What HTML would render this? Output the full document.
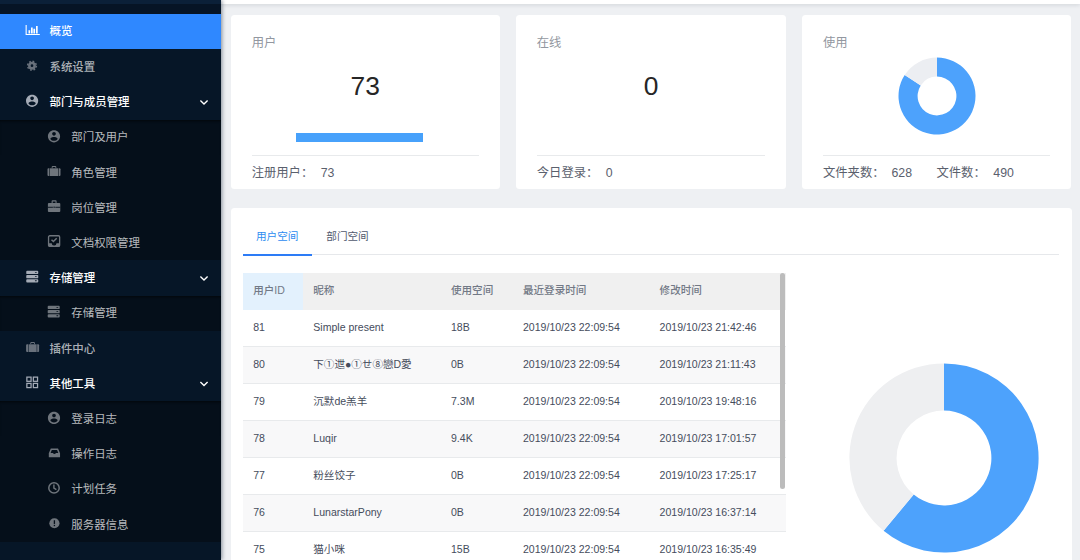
<!DOCTYPE html>
<html lang="zh-CN">
<head>
<meta charset="utf-8">
<title>概览</title>
<style>
*{box-sizing:border-box;margin:0;padding:0}
html,body{width:1080px;height:560px;overflow:hidden}
body{background:#eef0f3;font-family:"Liberation Sans","Noto Sans CJK SC",sans-serif;font-size:10.56px;color:#515a6e;position:relative}
.abs{position:absolute}
/* sidebar */
#side{position:absolute;left:0;top:0;width:221px;height:560px;background:#061627;box-shadow:1px 0 4px rgba(0,21,41,.45);z-index:5;overflow:hidden}
#side .logo{position:absolute;left:0;top:0;width:221px;height:4px;background:#0b2038}
#side .gap{position:absolute;left:0;top:4px;width:221px;height:10.1px;background:#061425}
.mi{position:absolute;left:0;width:221px;height:35.2px;line-height:35.2px;font-size:11.44px;white-space:nowrap}
.mi.top{background:#061627;color:#fff;font-weight:500}
.mi.plain{background:#061627;color:rgba(255,255,255,.68);font-weight:500}
.mi.sub{background:#050f1a;color:rgba(255,255,255,.72)}
.mi.sub.f{box-shadow:inset 0 2.5px 3px -1.5px rgba(0,0,0,.6)}
.mi.act{background:#2f88ff;color:#fff;font-weight:500}
.mi .t{position:absolute;left:49.5px;top:0.8px}
.mi.sub .t{left:71.3px}
.mi svg{position:absolute}
.mi .chev{left:199.5px;top:14.5px}
/* header */
#hdr{position:absolute;left:221px;top:0;width:859px;height:4.3px;background:#fff;box-shadow:0 1px 4px rgba(0,21,41,.13);z-index:2}
/* cards */
.card{position:absolute;top:14.8px;width:269px;height:174px;background:#fff;border-radius:3.5px}
.card .ttl{position:absolute;left:21px;top:20.4px;font-size:12.32px;color:#9297a0;line-height:16px}
.card .num{position:absolute;left:0;width:100%;text-align:center;top:55.5px;font-size:26.4px;line-height:32px;color:#262626;font-family:"Liberation Sans",sans-serif}
.card .hr{position:absolute;left:21px;right:21px;top:140px;height:1px;background:#e8eaec}
.card .ft{position:absolute;left:21px;top:150px;font-size:12.32px;line-height:17px;color:#5a606d;white-space:nowrap}
.card .ft b{font-weight:normal;position:absolute;top:0}
/* panel */
#panel{position:absolute;left:230.5px;top:208.3px;width:841px;height:360px;background:#fff;border-radius:3.5px}
.tab{position:absolute;top:230.2px;font-size:10.6px;line-height:12px;white-space:nowrap}
#tline{position:absolute;left:243px;top:254.2px;width:816px;height:1.3px;background:#e6e8eb}
#tink{position:absolute;left:243px;top:253.7px;width:68.7px;height:1.9px;background:#2d7cf6}
/* table */
#tbl{position:absolute;left:243px;top:273px;width:543px;height:300px;overflow:hidden}
.tr{position:absolute;left:0;width:543px;height:37px;border-bottom:1px solid #e8eaec;line-height:34.6px;white-space:nowrap;color:#454c5c}
.tr.h{background:#f0f0f0;color:#727986;font-weight:500;border-bottom:none}
.tr.s{background:#f8f8f9}
.tr span{position:absolute;top:0}
.c1{left:10.2px}.c2{left:70.3px}.c3{left:208px}.c4{left:280px}.c5{left:416.6px}
.tr.h .c1bg{position:absolute;left:0;top:0;width:60px;height:37px;background:#e3f1fd}
#sb{position:absolute;left:780px;top:273px;width:5.3px;height:216px;background:#bcbcbc;border-radius:3px;z-index:3}
</style>
</head>
<body>
<div id="hdr"></div>
<div id="side">
  <div class="logo"></div><div class="gap"></div>
  <div class="mi act" style="top:14.08px"><span class="t" style="top:0">概览</span></div>
  <div class="mi plain" style="top:49.28px"><span class="t">系统设置</span></div>
  <div class="mi top" style="top:84.48px"><span class="t">部门与成员管理</span></div>
  <div class="mi sub f" style="top:119.68px"><span class="t">部门及用户</span></div>
  <div class="mi sub" style="top:154.88px"><span class="t">角色管理</span></div>
  <div class="mi sub" style="top:190.08px"><span class="t">岗位管理</span></div>
  <div class="mi sub" style="top:225.28px"><span class="t">文档权限管理</span></div>
  <div class="mi top" style="top:260.48px"><span class="t">存储管理</span></div>
  <div class="mi sub f" style="top:295.68px"><span class="t">存储管理</span></div>
  <div class="mi plain" style="top:330.88px"><span class="t">插件中心</span></div>
  <div class="mi top" style="top:366.08px"><span class="t">其他工具</span></div>
  <div class="mi sub f" style="top:401.28px"><span class="t">登录日志</span></div>
  <div class="mi sub" style="top:436.48px"><span class="t">操作日志</span></div>
  <div class="mi sub" style="top:471.68px"><span class="t">计划任务</span></div>
  <div class="mi sub" style="top:506.88px"><span class="t">服务器信息</span></div>
</div>

<svg id="ico" class="abs" style="left:0;top:0;z-index:6" width="221" height="560" viewBox="0 0 221 560"><path transform="translate(25.6,25)" fill="#fff" d="M0 0h1.1v9h13.1v1.1H0z M2.9 5.3h1.7v3.1H2.9z M5.4 2.6h1.7v5.8H5.4z M7.8 3.7h1.7v4.7H7.8z M10.4 1h1.7v7.4h-1.7z"/><g transform="translate(32,65.7)" fill="none" stroke="#69717c"><circle r="2.65" stroke-width="2.6"/><circle r="4.4" stroke-width="1.5" stroke-dasharray="1.728 1.728"/></g><path transform="translate(24.60,93.30) scale(0.02930)" fill="#a4abb6" d="M256 48C141.6 48 48 141.6 48 256s93.6 208 208 208 208-93.6 208-208S370.4 48 256 48zm0 62.4c34.3 0 62.4 28.1 62.4 62.4s-28.1 62.4-62.4 62.4-62.4-28.1-62.4-62.4 28.1-62.4 62.4-62.4zm0 300.4c-52 0-97.8-27-124.8-66.6 1-41.6 83.2-64.5 124.8-64.5s123.8 22.9 124.8 64.5c-27 39.6-72.8 66.6-124.8 66.6z"/><path transform="translate(46.50,128.80) scale(0.02930)" fill="#6f757c" d="M256 48C141.6 48 48 141.6 48 256s93.6 208 208 208 208-93.6 208-208S370.4 48 256 48zm0 62.4c34.3 0 62.4 28.1 62.4 62.4s-28.1 62.4-62.4 62.4-62.4-28.1-62.4-62.4 28.1-62.4 62.4-62.4zm0 300.4c-52 0-97.8-27-124.8-66.6 1-41.6 83.2-64.5 124.8-64.5s123.8 22.9 124.8 64.5c-27 39.6-72.8 66.6-124.8 66.6z"/><g transform="translate(47.5,166)" fill="#6f757c"><path d="M4.2 2.3V1.1a1 1 0 0 1 1-1h2.6a1 1 0 0 1 1 1v1.2H7.9V1.05H5.1v1.25z"/><path d="M1.9 2.3v7.7H1a1 1 0 0 1-1-1V3.3a1 1 0 0 1 1-1z"/><rect x="2.45" y="2.3" width="8.1" height="7.7"/><path d="M11.1 2.3H12a1 1 0 0 1 1 1V9a1 1 0 0 1-1 1h-.9z"/></g><g transform="translate(47.9,200.3)" fill="#6f757c"><path d="M3.7 2.9V1a1 1 0 0 1 1-1h3a1 1 0 0 1 1 1v1.9H7.6V1.1H4.8v1.8z"/><rect x="0" y="2.7" width="12.4" height="9" rx="1"/><rect x="0" y="6.5" width="5" height="0.9" fill="#050f1a"/><rect x="7.4" y="6.5" width="5" height="0.9" fill="#050f1a"/><rect x="5.7" y="6.2" width="1" height="1.5" fill="#050f1a"/></g><g transform="translate(47.9,235.1)" fill="none" stroke="#6f757c"><rect x="0.65" y="0.65" width="11.1" height="10.7" rx="1.2" stroke-width="1.3"/><path d="M0.6 8.2h3.2a2.4 2.4 0 0 0 4.8 0h3.2v3H0.6z" fill="#6f757c" stroke="none"/><path d="M3.6 4.6l1.9 1.8 3.3-3.2" stroke-width="1.5"/></g><g transform="translate(26.25,270.75)" fill="#a4abb6"><rect x="0" y="0" width="12" height="3.35" rx="0.9"/><rect x="8.6" y="1.2" width="2" height="0.9" rx=".45" fill="#061627"/><rect x="0" y="4.2" width="12" height="3.35" rx="0.9"/><rect x="8.6" y="5.4" width="2" height="0.9" rx=".45" fill="#061627"/><rect x="0" y="8.4" width="12" height="3.35" rx="0.9"/><rect x="8.6" y="9.6" width="2" height="0.9" rx=".45" fill="#061627"/></g><g transform="translate(47.7,305.75)" fill="#6f757c"><rect x="0" y="0" width="12" height="3.35" rx="0.9"/><rect x="8.6" y="1.2" width="2" height="0.9" rx=".45" fill="#050f1a"/><rect x="0" y="4.2" width="12" height="3.35" rx="0.9"/><rect x="8.6" y="5.4" width="2" height="0.9" rx=".45" fill="#050f1a"/><rect x="0" y="8.4" width="12" height="3.35" rx="0.9"/><rect x="8.6" y="9.6" width="2" height="0.9" rx=".45" fill="#050f1a"/></g><g transform="translate(26.1,342)" fill="#69717c"><path d="M4.2 2.3V1.1a1 1 0 0 1 1-1h2.6a1 1 0 0 1 1 1v1.2H7.9V1.05H5.1v1.25z"/><path d="M1.9 2.3v7.7H1a1 1 0 0 1-1-1V3.3a1 1 0 0 1 1-1z"/><rect x="2.45" y="2.3" width="8.1" height="7.7"/><path d="M11.1 2.3H12a1 1 0 0 1 1 1V9a1 1 0 0 1-1 1h-.9z"/></g><g transform="translate(26.25,376.5)" fill="none" stroke="#a4abb6" stroke-width="1.25"><rect x="0.62" y="0.62" width="4.2" height="4.2"/><rect x="0.62" y="6.9" width="4.2" height="4.2"/><rect x="7.1" y="0.62" width="4.2" height="4.2"/><rect x="7.1" y="6.9" width="4.2" height="4.2"/></g><path transform="translate(46.50,410.40) scale(0.02930)" fill="#6f757c" d="M256 48C141.6 48 48 141.6 48 256s93.6 208 208 208 208-93.6 208-208S370.4 48 256 48zm0 62.4c34.3 0 62.4 28.1 62.4 62.4s-28.1 62.4-62.4 62.4-62.4-28.1-62.4-62.4 28.1-62.4 62.4-62.4zm0 300.4c-52 0-97.8-27-124.8-66.6 1-41.6 83.2-64.5 124.8-64.5s123.8 22.9 124.8 64.5c-27 39.6-72.8 66.6-124.8 66.6z"/><path transform="translate(48.8,448.6)" fill="#6f757c" fill-rule="evenodd" d="M2 0h7.25l2 4.6v4.15H0V4.6zM3 1.5L1.8 4.4h2.4a1.5 1.5 0 0 0 2.9 0h2.4L8.3 1.5z"/><g transform="translate(54,487.9)" fill="none" stroke="#6f757c"><circle r="5.2" stroke-width="1.5"/><path d="M-.1 -3.3v3.5l2.5 1.5" stroke-width="1.4"/></g><g transform="translate(54.4,523.25)"><circle r="5.1" fill="#6f757c"/><rect x="-.65" y="-3" width="1.3" height="3.7" fill="#050f1a"/><rect x="-.65" y="1.6" width="1.3" height="1.3" fill="#050f1a"/></g><path transform="translate(204,102.3)" d="M-3.6 -1.9L0 1.7 3.6 -1.9" fill="none" stroke="#fff" stroke-width="1.35"/><path transform="translate(204,278.3)" d="M-3.6 -1.9L0 1.7 3.6 -1.9" fill="none" stroke="#fff" stroke-width="1.35"/><path transform="translate(204,383.9)" d="M-3.6 -1.9L0 1.7 3.6 -1.9" fill="none" stroke="#fff" stroke-width="1.35"/></svg>

<div class="card" style="left:230.7px">
  <div class="ttl">用户</div>
  <div class="num">73</div>
  <div class="abs" style="left:65px;top:118px;width:127.2px;height:8.9px;background:#47a1fb"></div>
  <div class="hr"></div>
  <div class="ft">注册用户： <b style="left:69px">73</b></div>
</div>
<div class="card" style="left:515.8px;width:270.4px">
  <div class="ttl">在线</div>
  <div class="num">0</div>
  <div class="hr"></div>
  <div class="ft">今日登录： <b style="left:69px">0</b></div>
</div>
<div class="card" style="left:802px">
  <div class="ttl">使用</div>
  <svg class="abs" style="left:89.6px;top:36px" width="90" height="90" viewBox="-45 -45 90 90">
    <path d="M0 -38.5 A38.5 38.5 0 1 1 -32.29 -20.97 L-16.27 -10.57 A19.4 19.4 0 1 0 0 -19.4 Z" fill="#4da2fc"/><path d="M0 -38.5 A38.5 38.5 0 0 0 -32.29 -20.97 L-16.27 -10.57 A19.4 19.4 0 0 1 0 -19.4 Z" fill="#eceef2"/>
  </svg>
  <div class="hr"></div>
  <div class="ft">文件夹数： <b style="left:68.5px">628</b><b style="left:113.5px">文件数：</b><b style="left:170.3px">490</b></div>
</div>

<div id="panel"></div>
<div class="tab" style="left:256px;color:#2d8cf0">用户空间</div>
<div class="tab" style="left:326.3px;color:#515a6e">部门空间</div>
<div id="tline"></div><div id="tink"></div>

<div id="tbl">
  <div class="tr h" style="top:0"><div class="c1bg"></div><span class="c1">用户ID</span><span class="c2">昵称</span><span class="c3">使用空间</span><span class="c4">最近登录时间</span><span class="c5">修改时间</span></div>
  <div class="tr" style="top:37px"><span class="c1">81</span><span class="c2">Simple present</span><span class="c3">18B</span><span class="c4">2019/10/23 22:09:54</span><span class="c5">2019/10/23 21:42:46</span></div>
  <div class="tr s" style="top:74px"><span class="c1">80</span><span class="c2">下①迣●①せ⑧戀D愛</span><span class="c3">0B</span><span class="c4">2019/10/23 22:09:54</span><span class="c5">2019/10/23 21:11:43</span></div>
  <div class="tr" style="top:111px"><span class="c1">79</span><span class="c2">沉默de羔羊</span><span class="c3">7.3M</span><span class="c4">2019/10/23 22:09:54</span><span class="c5">2019/10/23 19:48:16</span></div>
  <div class="tr s" style="top:148px"><span class="c1">78</span><span class="c2">Luqir</span><span class="c3">9.4K</span><span class="c4">2019/10/23 22:09:54</span><span class="c5">2019/10/23 17:01:57</span></div>
  <div class="tr" style="top:185px"><span class="c1">77</span><span class="c2">粉丝饺子</span><span class="c3">0B</span><span class="c4">2019/10/23 22:09:54</span><span class="c5">2019/10/23 17:25:17</span></div>
  <div class="tr s" style="top:222px"><span class="c1">76</span><span class="c2">LunarstarPony</span><span class="c3">0B</span><span class="c4">2019/10/23 22:09:54</span><span class="c5">2019/10/23 16:37:14</span></div>
  <div class="tr" style="top:259px"><span class="c1">75</span><span class="c2">猫小咪</span><span class="c3">15B</span><span class="c4">2019/10/23 22:09:54</span><span class="c5">2019/10/23 16:35:49</span></div>
</div>
<div id="sb"></div>

<svg class="abs" style="left:844.2px;top:357.9px" width="200" height="200" viewBox="-100 -100 200 200">
  <path d="M0 -94.6 A94.6 94.6 0 1 1 -60.43 72.79 L-30.28 36.47 A47.4 47.4 0 1 0 0 -47.4 Z" fill="#4da2fc"/><path d="M0 -94.6 A94.6 94.6 0 0 0 -60.43 72.79 L-30.28 36.47 A47.4 47.4 0 0 1 0 -47.4 Z" fill="#eeeff1"/>
</svg>
</body>
</html>
